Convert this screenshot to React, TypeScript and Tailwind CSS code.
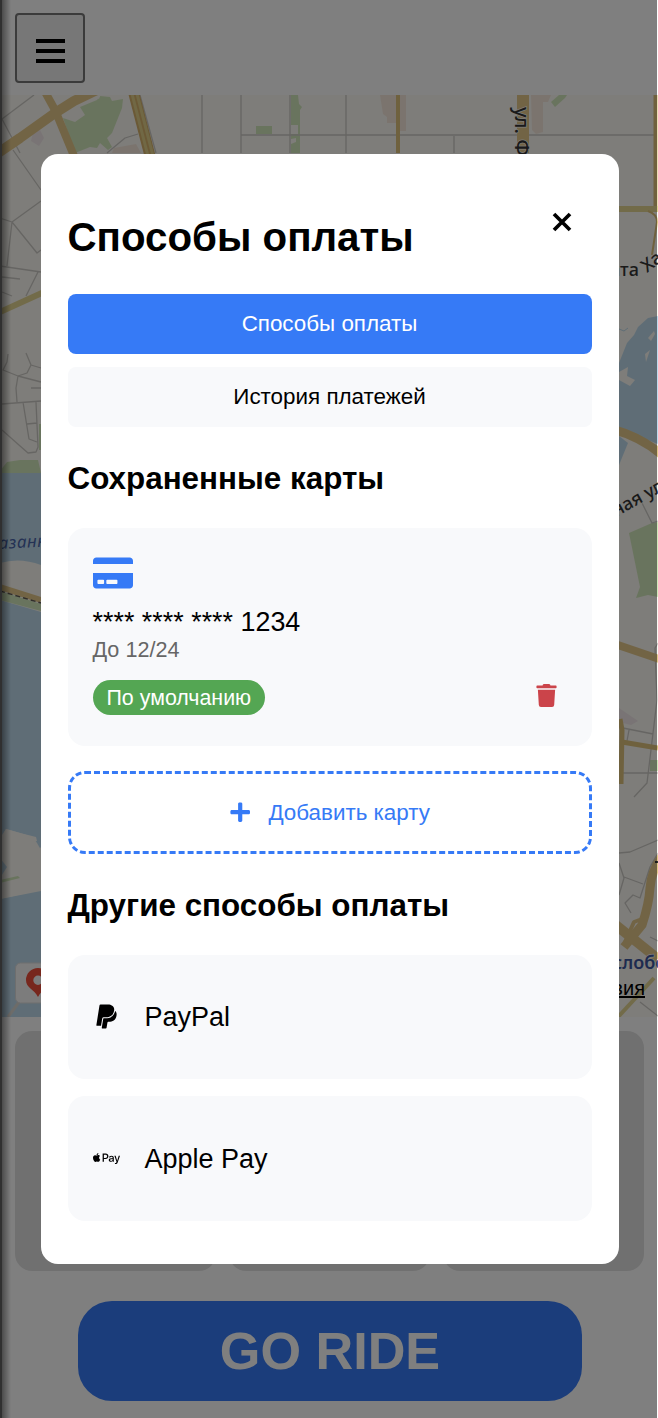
import type { ReactNode } from "react";
import { FaApplePay, FaCreditCard, FaPaypal, FaPlus, FaTrash } from "react-icons/fa";

function CityMap() {
  return (
    <svg className="block h-[922px] w-full shrink-0" viewBox="0 95 658 922">
      <rect x="0" y="95" width="658" height="922" fill="#fcfaf4" />

      {/* water */}
      <g fill="#bfdbed">
        <path d="M0 473H41V565Q20 557 0 563Z" />
        <path d="M0 600L41 612V850L37 843L33 837L20 833L6 829L0 840V878V899L41 890V1017H0Z" />
        <path d="M658 316L648 318L638 327L634 335L627 343L619 363V429L658 444Z" />
        <path d="M619 436L628 443L619 465Z" />
        <path d="M619 329l5 2l4-3" fill="none" stroke="#bfdbed" />
      </g>
      <g fill="#fcfaf4">
        <path d="M619 372L628 367L627 376L635 380L630 386L619 380Z" />
        <path d="M648 338L654 331L655 334L651 341Z" />
        <path d="M645 354L650 350L646 362Z" />
        <path d="M0 838L6 829L20 833L36 837L37 841L27 843L13 852L20 858L33 857L41 847V891L0 899Z" />
      </g>
      <path d="M0 858L7 867L0 878Z" fill="#bfdbed" />

      {/* parks */}
      <g fill="#d3e9bc">
        <path d="M63 118L75 122L85 115L80 107L97 100L100 96L110 97L112 101L123 99L122 108L112 133L107 138L112 147L108 150L100 143L97 148L90 147L75 153Z" />
        <path d="M256 126h16v8h-16zM290 95h8l1 9l3 3l-2 3v43h-9V95Z" />
        <path d="M551 102L559 95H567L565 98L555 107Z" />
        <path d="M0 471L7 462L20 460H38L41 473H0ZM39 424H41V450H39Z" />
        <path d="M0 591L41 604V611L0 600Z" />
        <path d="M629 533L652 523L658 522V597L648 595L636 598L640 587Z" />
        <path d="M650 760h8v11h-8zM0 880L18 876L20 878L0 883Z" />
      </g>
      <g fill="#fcfaf4">
        <path d="M291 125h7v9h-7zM291 139l5-1v4l-5 2zM94 97l7-3l-2 5z" />
      </g>
      <g fill="#f7e9dd">
        <path d="M380 95H398V123H387V117L383 114ZM400 95H406V131H400ZM531 95H551L548 102H543V132L536 134L532 130ZM114 148L136 144L141 153H112Z" />
        <path d="M33 133l7-3l4 8l-5 8l-8-5zM619 708l19 13l-7 4l-12-3z" fill="#f3e8ea" />
      </g>

      {/* lanes and minor streets */}
      <g fill="none" stroke="#cdcbc6" strokeWidth="1.3" strokeLinejoin="round">
        <path d="M34 95L2 119L20 153M202 95V153M241 95V153M290 95V153M241 135H655M346 95V153M454 136V153M140 95L156 153M107 153L125 138L138 134" />
        <path d="M13 150L41 190M0 218L12 222L41 201M12 222L37 253L41 250M12 222L7 266M0 266L41 272M38 272L26 296M2 277L20 279M2 292L12 296" />
        <path d="M8 354L7 362L3 370L18 376L16 388L17 402M26 353L31 365L27 373L18 376L41 382M31 365L41 368M31 388H41M2 404L41 401M23 402L29 439L37 442M36 402L38 447L36 452L28 453L2 430M27 424L37 423" />
        <path d="M641 501L652 523L658 521M658 643L655 648L657 700L647 783L634 797M623 728L653 734M629 730L627 741M619 773H658M619 853L630 852L658 840M619 863L624 878L619 895M624 877L643 884M658 853L650 867L640 898L633 895L625 903L631 913M650 937L658 941M640 1002L658 1016" />
      </g>

      {/* main roads */}
      <g fill="none" stroke="#e5c98b" strokeLinejoin="round">
        <path d="M-5 155L20 138L55 113L74 101L99 89" strokeWidth="10" />
        <path d="M44 90L55 110L74 156" strokeWidth="8" />
        <path d="M523 95V153" strokeWidth="12" />
        <path d="M0 587L41 600" strokeWidth="6" />
        <path d="M612 429Q641 437 662 455" strokeWidth="9" />
        <path d="M612 643L662 660" strokeWidth="8" />
        <path d="M662 856Q651 872 650 888T642 925L624 947" strokeWidth="9" />
        <path d="M612 922L662 962" strokeWidth="10" />
        <path d="M625 942L634 922L642 919" strokeWidth="4" />
      </g>
      <g fill="none" stroke="#dec37d">
        <path d="M133 90L150 156" strokeWidth="11" stroke="#d6b36d" />
        <path d="M131 90L148 156M136 90L153 156" strokeWidth="3" stroke="#e2d18a" />
        <path d="M398 95V153" strokeWidth="4" />
        <path d="M655.500 95V209" strokeWidth="4" />
        <path d="M612 209H658M0 312L44 292" strokeWidth="6" stroke="#e4d693" />
        <path d="M648 211Q657 214 657 222L652 255" strokeWidth="2" />
        <path d="M620 719L622 730L621 784" strokeWidth="5" />
        <path d="M622 742L658 748" strokeWidth="5" />
        <path d="M618 1017L654 978" strokeWidth="4" stroke="#e4d693" />
      </g>
      <path d="M0 591L41 603" stroke="#605b55" strokeWidth="1.500" strokeDasharray="5 3" />
      <path d="M8 1017L22 998" stroke="#dbd8d2" strokeWidth="3" />
      <path d="M655 862h3" stroke="#333" strokeWidth="2" />

      {/* street names */}
      <g
        className="font-['Noto_Sans']"
        fill="#353535"
        stroke="#fcfaf4"
        strokeWidth="1.500"
        paintOrder="stroke"
        fontSize="18"
        fontWeight="500"
      >
        <text transform="translate(515 107) rotate(90)" fontSize="20">ул. Фа</text>
        <text x="610" y="276">ата</text>
        <text transform="translate(647 273) rotate(-38)">Ха</text>
        <text transform="translate(616 517) rotate(-29)">ная ул</text>
        <text
          transform="translate(-1 549) rotate(-3)"
          fontSize="17"
          fontStyle="italic"
          fontWeight="400"
          letterSpacing="0.500"
          fill="#4864a8"
          strokeWidth="0"
        >
          азанк
        </text>
        <text x="613" y="969" fontWeight="600" fill="#3c569e">слобо</text>
      </g>
      <text
        x="645"
        y="995"
        textAnchor="end"
        className="font-['Liberation_Sans'] underline"
        fontSize="20"
        fill="#000"
      >
        вия
      </text>

      {/* place marker */}
      <rect x="15.500" y="963" width="60" height="40" rx="5" fill="#f8f8f8" stroke="#ddd" strokeWidth="1" />
      <path
        fillRule="evenodd"
        fill="#ef4e3a"
        d="M38 968a12 12 0 0 0-12 12c0 8 8 9 12 17c4-8 12-9 12-17a12 12 0 0 0-12-12zm0 7.500a4.700 4.700 0 1 1 0 9.400a4.700 4.700 0 0 1 0-9.400z"
      />
    </svg>
  );
}

function PaymentMethod({ icon, label }: { icon: ReactNode; label: string }) {
  return (
    <div className="flex h-[124.500px] items-center rounded-[17px] bg-[#f8f9fb] px-[25px]">
      <span className="flex w-[27px] justify-center text-[27px]">{icon}</span>
      <span className="ml-[25px] pt-[2px] text-[27px] leading-none">{label}</span>
    </div>
  );
}

function PaymentDialog() {
  return (
    <div className="absolute left-[40.500px] top-[153.500px] flex h-[1110.500px] w-[578px] flex-col rounded-[17px] bg-white px-[27px] text-black">
      <div className="flex items-start justify-between pt-[58px]">
        <h2 className="pt-[2px] text-[40.300px] font-bold leading-[48px] whitespace-nowrap">Способы оплаты</h2>
        <button className="mr-[20px] p-0" aria-label="Закрыть">
          <svg className="block h-[20px] w-[20px]" viewBox="0 0 20 20" stroke="#000" strokeWidth="3.700">
            <path d="M2 2L18 18M18 2L2 18" />
          </svg>
        </button>
      </div>

      <div className="mt-[32px] flex flex-col gap-[13px] text-[22.400px]">
        <button className="h-[60px] rounded-[8px] bg-[#367af6] text-white">Способы оплаты</button>
        <button className="h-[60px] rounded-[8px] bg-[#f8f9fb]">История платежей</button>
      </div>

      <h3 className="mt-[33px] text-[31.400px] font-bold leading-[38px]">Сохраненные карты</h3>
      <div className="mt-[30px] flex h-[218px] shrink-0 flex-col rounded-[17px] bg-[#f8f9fb] px-[25px] pt-[25px]">
        <FaCreditCard className="shrink-0 text-[40px] text-[#367af6]" />
        <div className="mt-[14px] text-[26.900px] leading-[30px]">**** **** **** 1234</div>
        <div className="text-[21.600px] leading-[25px] text-[#666]">До 12/24</div>
        <div className="mt-[18px] flex items-start justify-between">
          <span className="flex h-[35px] items-center rounded-full bg-[#54a653] px-[14px] pt-[2px] text-[21.400px]">
            <span className="text-white">По умолчанию</span>
          </span>
          <FaTrash className="mr-[8.500px] mt-[4px] text-[23px] text-[#cb444a]" />
        </div>
      </div>

      <button className="mt-[25px] flex h-[83px] shrink-0 items-center justify-center gap-[17px] rounded-[17px] border-[3px] border-dashed border-[#367af6] pt-px text-[22.400px] text-[#367af6]">
        <FaPlus />
        <span>Добавить карту</span>
      </button>

      <h3 className="mt-[33px] text-[31.400px] font-bold leading-[38px]">Другие способы оплаты</h3>
      <div className="mt-[30px] flex flex-col gap-[17px]">
        <PaymentMethod icon={<FaPaypal />} label="PayPal" />
        <PaymentMethod icon={<FaApplePay />} label="Apple Pay" />
      </div>
    </div>
  );
}

export default function App() {
  return (
    <div className="relative h-[1418px] w-[658px] overflow-hidden bg-white font-['Liberation_Sans',sans-serif]">
      <div className="flex h-full flex-col">
        <header className="h-[95px] shrink-0 pl-[15px] pt-[13px]">
          <button className="flex h-[70px] w-[70px] flex-col items-center justify-center gap-[6px] rounded-[4px] border-2 border-[#767676] bg-[#efefef] pt-[5px]">
            <span className="h-[4px] w-[29px] bg-black" />
            <span className="h-[4px] w-[29px] bg-black" />
            <span className="h-[4px] w-[29px] bg-black" />
          </button>
        </header>
        <CityMap />
        <div className="mt-[14px] flex h-[240px] gap-[13px] pl-[15px] pr-[14px]">
          <div className="flex-1 rounded-[17px] bg-[#e1e1e1]" />
          <div className="flex-1 rounded-[17px] bg-[#e1e1e1]" />
          <div className="flex-1 rounded-[17px] bg-[#e1e1e1]" />
        </div>
        <button className="ml-[78px] mt-[30px] h-[100px] w-[504px] shrink-0 rounded-[34px] bg-[#367af6] text-[52.200px] font-bold text-white">
          GO RIDE
        </button>
      </div>

      <div className="absolute inset-y-0 left-0 w-[11px] bg-linear-to-r from-black/50 to-transparent" />
      <div className="absolute inset-y-0 left-0 w-[657px] bg-black/50" />
      <div className="absolute inset-y-0 left-0 w-[2px] bg-[#303030]" />
      <PaymentDialog />
    </div>
  );
}
